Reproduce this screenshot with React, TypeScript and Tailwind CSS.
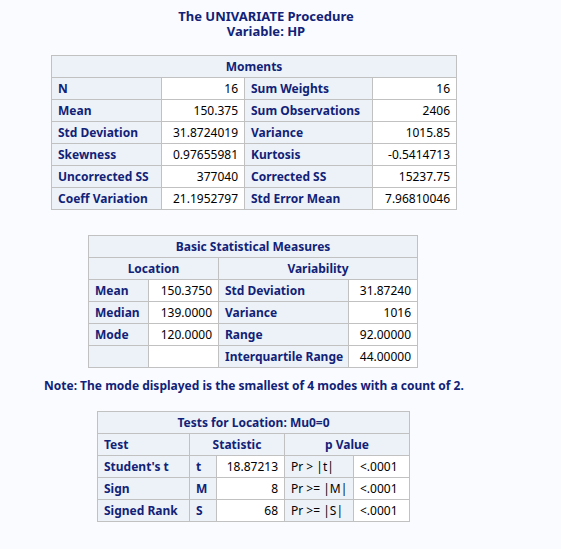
import React from 'react';

const H = 'bg-[#edf2f9] text-[#112277] font-bold border border-[#c1c1c1] px-[6px] h-[22px] whitespace-nowrap';
const D = 'bg-white text-black border border-[#c1c1c1] px-[6px] h-[22px] text-right whitespace-nowrap';

const App = () => {
  return (
    <div className="w-[561px] h-[549px] bg-[#fafbfe] text-[12px] font-['Liberation_Sans'] leading-[14px]">
      <div className="w-[532px] pt-[9px] text-center text-[#112277] font-bold text-[13px] leading-[15px]">
        <div>The UNIVARIATE Procedure</div>
        <div>Variable: HP</div>
      </div>

      {/* Moments */}
      <table className="ml-[51px] mt-[16px] border-collapse table-fixed w-[405px]">
        <colgroup>
          <col className="w-[110px]" /><col className="w-[83px]" /><col className="w-[128px]" /><col className="w-[84px]" />
        </colgroup>
        <tbody>
          <tr><th colSpan={4} className={`${H} text-center`}>Moments</th></tr>
          {[
            ['N', '16', 'Sum Weights', '16'],
            ['Mean', '150.375', 'Sum Observations', '2406'],
            ['Std Deviation', '31.8724019', 'Variance', '1015.85'],
            ['Skewness', '0.97655981', 'Kurtosis', '-0.5414713'],
            ['Uncorrected SS', '377040', 'Corrected SS', '15237.75'],
            ['Coeff Variation', '21.1952797', 'Std Error Mean', '7.96810046'],
          ].map((r) => (
            <tr key={r[0]}>
              <th className={`${H} text-left`}>{r[0]}</th>
              <td className={D}>{r[1]}</td>
              <th className={`${H} text-left`}>{r[2]}</th>
              <td className={D}>{r[3]}</td>
            </tr>
          ))}
        </tbody>
      </table>

      {/* Basic Statistical Measures */}
      <table className="ml-[88px] mt-[25px] border-collapse table-fixed w-[329px]">
        <colgroup>
          <col className="w-[60px]" /><col className="w-[70px]" /><col className="w-[130px]" /><col className="w-[69px]" />
        </colgroup>
        <tbody>
          <tr><th colSpan={4} className={`${H} text-center`}>Basic Statistical Measures</th></tr>
          <tr>
            <th colSpan={2} className={`${H} text-center`}>Location</th>
            <th colSpan={2} className={`${H} text-center`}>Variability</th>
          </tr>
          {[
            ['Mean', '150.3750', 'Std Deviation', '31.87240'],
            ['Median', '139.0000', 'Variance', '1016'],
            ['Mode', '120.0000', 'Range', '92.00000'],
            ['', '', 'Interquartile Range', '44.00000'],
          ].map((r) => (
            <tr key={r[2]}>
              <th className={`${H} text-left`}>{r[0]}</th>
              <td className={D}>{r[1]}</td>
              <th className={`${H} text-left`}>{r[2]}</th>
              <td className={D}>{r[3]}</td>
            </tr>
          ))}
        </tbody>
      </table>

      <div className="ml-[44px] mt-[11px] text-[#112277] font-bold">
        Note: The mode displayed is the smallest of 4 modes with a count of 2.
      </div>

      {/* Tests for Location */}
      <table className="ml-[97px] mt-[18px] border-collapse table-fixed w-[312px]">
        <colgroup>
          <col className="w-[92px]" /><col className="w-[27px]" /><col className="w-[68px]" /><col className="w-[69px]" /><col className="w-[56px]" />
        </colgroup>
        <tbody>
          <tr><th colSpan={5} className={`${H} text-center`}>Tests for Location: Mu0=0</th></tr>
          <tr>
            <th className={`${H} text-left`}>Test</th>
            <th colSpan={2} className={`${H} text-center`}>Statistic</th>
            <th colSpan={2} className={`${H} text-center`}>p Value</th>
          </tr>
          {[
            ["Student's t", 't', '18.87213', 'Pr > |t|'],
            ['Sign', 'M', '8', 'Pr >= |M|'],
            ['Signed Rank', 'S', '68', 'Pr >= |S|'],
          ].map((r) => (
            <tr key={r[0]}>
              <th className={`${H} text-left`}>{r[0]}</th>
              <th className={`${H} text-left`}>{r[1]}</th>
              <td className={D}>{r[2]}</td>
              <td className={`${H} text-left !font-normal !text-black`}>{r[3]}</td>
              <td className={`${D} !text-left`}>&lt;.0001</td>
            </tr>
          ))}
        </tbody>
      </table>
    </div>
  );
};

export default App;
